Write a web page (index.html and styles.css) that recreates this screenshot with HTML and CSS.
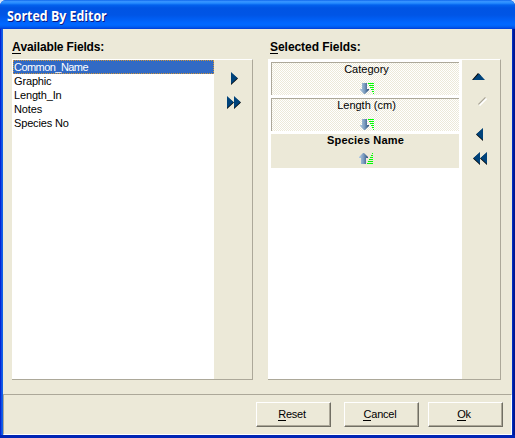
FILE: index.html
```html
<!DOCTYPE html>
<html lang="en">
<head>
<meta charset="utf-8">
<title>Sorted By Editor</title>
<link rel="stylesheet" href="styles.css">
</head>
<body>
<svg class="defs" width="0" height="0">
  <defs>
    <linearGradient id="steel"><stop offset="0" stop-color="#b4cce4"/><stop offset=".5" stop-color="#7b9cbf"/><stop offset="1" stop-color="#284d7c"/></linearGradient>
    <symbol id="desc" viewBox="0 0 14 12"><path d="M2 0h5v6h2v1L5 11H4L0 7V6h2z" fill="url(#steel)"/><path d="M8 .5h6M9 2.500h5M10 4.500h4M11 6.500h3M12 8.500h2M13 10.500h1" stroke="#0f0"/></symbol>
    <symbol id="asc" viewBox="0 0 14 12"><path d="M2 11h5V5h2V4L5 0H4L0 4v1h2z" fill="url(#steel)"/><path d="M13 .5h1M12 2.500h2M11 4.500h3M10 6.500h4M9 8.500h5M8 10.500h6" stroke="#0f0"/></symbol>
  </defs>
</svg>
<div class="window">
  <header class="titlebar"><span>Sorted By Editor</span></header>
  <main class="content">
    <section class="available">
      <h2 class="label"><u>A</u>vailable Fields:</h2>
      <div class="panel">
        <ul class="list">
          <li class="selected">Common_Name</li>
          <li class="graphic">Graphic</li>
          <li>Length_In</li>
          <li>Notes</li>
          <li>Species No</li>
        </ul>
        <div class="tools add">
          <svg width="8" height="14" viewBox="0 0 8 14"><path d="M0 1v12l7-6.500z"/><path class="navy" d="M0 0v12l6.500-6z"/></svg>
          <svg width="15" height="14" viewBox="0 0 15 14"><path d="M0 1v12l7-6.500zM7 1v12l7-6.500z"/><path class="navy" d="M0 0v12l6.500-6zM7 0v12l6.500-6z"/></svg>
        </div>
      </div>
    </section>
    <section class="chosen">
      <h2 class="label"><u>S</u>elected Fields:</h2>
      <div class="panel">
        <div class="cards">
          <div class="card"><span>Category</span><svg width="14" height="12"><use href="#desc"/></svg></div>
          <div class="card"><span>Length (cm)</span><svg width="14" height="12"><use href="#desc"/></svg></div>
          <div class="card active"><span>Species Name</span><svg width="14" height="12"><use href="#asc"/></svg></div>
        </div>
        <div class="tools order">
          <svg width="13" height="7" viewBox="0 0 13 7"><path d="M0 7l6-7 3 3-3 4z"/><path class="navy" d="M1 7l6-6.500 6 6.500z"/></svg>
          <svg width="9" height="9" viewBox="0 0 9 9"><path d="M.5 7.500L7.500 .5" stroke="#aca899" stroke-width="1.400"/><path d="M1.500 8.500L8.500 1.500" stroke="#fff" stroke-width="1.600"/></svg>
          <svg width="7" height="14" viewBox="0 0 7 14"><path d="M0 6.500l7-6v12.500z"/><path class="navy" d="M.5 6l6.500-6v12z"/></svg>
          <svg width="14" height="14" viewBox="0 0 14 14"><path d="M0 6.500l7-6v12.500zM7 6.500l7-6v12.500z"/><path class="navy" d="M.5 6l6.500-6v12zM7.500 6l6.500-6v12z"/></svg>
        </div>
      </div>
    </section>
  </main>
  <footer class="actions">
    <button><u>R</u>eset</button>
    <button><u>C</u>ancel</button>
    <button><u>O</u>k</button>
  </footer>
</div>
</body>
</html>
```

FILE: styles.css
```css
* { box-sizing: border-box; }
body { margin: 0; background: #d6e4f8; font: 11px/14px "Liberation Sans", Arial, sans-serif; color: #000; overflow: hidden; }
.defs { position: absolute; }
svg { display: block; }
.navy { fill: #00437b; }
u { text-decoration: none; box-shadow: 0 1px #000; display: inline-block; line-height: 12px; }
.window { width: 515px; height: 438px; padding: 0 3px 3px; display: flex; flex-direction: column; border-radius: 6px 6px 0 0; background: linear-gradient(90deg, #0019cf 0, #0831d9 1px, #166aee 2px, #0855dd 3px, #0855dd 512px, #0040e0 512px, #001da0 513px, #00138c 515px); box-shadow: inset 0 -3px #0025b5; }
.titlebar { flex: none; height: 29px; margin: 0 -3px; padding: 7px 7px 0; border-radius: 6px 6px 0 0; color: #fff; font: bold 14px/18px "Open Sans", sans-serif; text-shadow: 1px 1px #0a1883; background: linear-gradient(#0058e6 0, #3a93ff 1px, #288eff 3px, #0362ee 5px, #0054e3 8px, #0055e6 15px, #0066ff 23px, #0068ff 25px, #005bf0 27px, #003dd7 29px); }
.titlebar span { display: inline-block; transform: scaleX(.885); transform-origin: 0 50%; }
.content { flex: none; height: 365px; padding: 10px 11px 0 9px; display: flex; gap: 15px; background: #ece9d8; }
.available { width: 241px; }
.chosen { width: 233px; }
.label { margin: 0; height: 20px; font: bold 12px/16px "Liberation Sans", Arial, sans-serif; }
.available .label { letter-spacing: -.15px; }
.chosen .label { padding-left: 2px; letter-spacing: -.05px; }
.panel { height: 321px; display: flex; border: solid #aca899; border-width: 1px 1px 1px 0; border-top-color: #fff; }
.list { width: 202px; margin: 0; padding: 0; list-style: none; background: #fff; }
.list li { height: 14px; padding-left: 2px; line-height: 14px; letter-spacing: -.15px; }
.list .selected { margin-left: 1px; padding-left: 0; color: #fff; background: #316ac5; border: 1px dotted #ce953a; line-height: 12px; letter-spacing: -.55px; }
.tools { display: flex; flex-direction: column; align-items: flex-start; flex: 1; }
.add { padding: 12px 0 0 13px; gap: 10px; }
.add svg:first-child { margin-left: 4px; }
.cards { width: 194px; padding: 2px 3px 0; display: grid; align-content: start; gap: 3px; background: #fff; }
.card { height: 33px; display: flex; flex-direction: column; align-items: center; justify-content: space-between; line-height: 12px; border: solid #aca899; border-width: 1px 0 0 1px; background: repeating-conic-gradient(#ece9d8 0 25%, #fff 0 50%) 0 0 / 2px 2px; }
.card span { padding-left: 2px; }
.card svg { margin-left: 3px; }
.card.active { height: 34px; padding-bottom: 3px; border: 0; background: #ece9d8; font-weight: bold; letter-spacing: .2px; }
.card.active span { padding-left: 1px; }
.card.active svg { margin-left: 2px; }
.order svg:nth-child(1) { margin: 13px 0 0 10px; }
.order svg:nth-child(2) { margin: 17px 0 0 16px; }
.order svg:nth-child(3) { margin: 22px 0 0 14px; }
.order svg:nth-child(4) { margin: 10px 0 0 11px; }
.actions { flex: none; height: 41px; display: flex; gap: 9px; align-items: flex-start; justify-content: flex-end; padding: 7px 8px 0; background: #ece9d8; border: 1px solid #fff; border-top-color: #aca899; border-left-color: #aca899; }
button { width: 75px; height: 25px; padding: 0 3px 2px 0; font: 11px/14px "Liberation Sans", Arial, sans-serif; letter-spacing: -.2px; color: #000; background: #ece9d8; border: solid; border-width: 1px; border-color: #fff #716f64 #716f64 #fff; box-shadow: inset -1px -1px #aca899; }
button:first-child { margin-right: 4px; }
```
